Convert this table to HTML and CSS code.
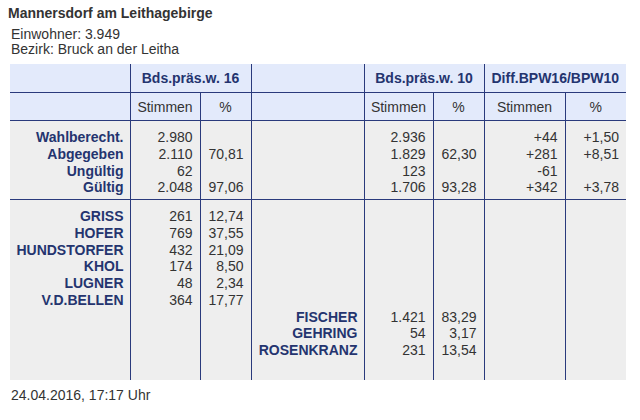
FILE: index.html
```html
<!DOCTYPE html>
<html lang="de">
<head>
<meta charset="utf-8">
<title>Mannersdorf am Leithagebirge</title>
<link rel="stylesheet" href="styles.css">
</head>
<body>
<div class="page">
  <div class="title">Mannersdorf am Leithagebirge</div>
  <div class="info">
    <div>Einwohner: 3.949</div>
    <div>Bezirk: Bruck an der Leitha</div>
  </div>
  <table class="results">
    <colgroup>
      <col class="c-name"><col class="c-st1"><col class="c-pc1"><col class="c-name2"><col class="c-st2"><col class="c-pc2"><col class="c-st3"><col class="c-pc3">
    </colgroup>
    <thead>
      <tr class="h1">
        <td></td>
        <th colspan="2">Bds.präs.w. 16</th>
        <td></td>
        <th colspan="2">Bds.präs.w. 10</th>
        <th colspan="2" class="last">Diff.BPW16/BPW10</th>
      </tr>
      <tr class="h2">
        <td></td>
        <th>Stimmen</th>
        <th>%</th>
        <td></td>
        <th>Stimmen</th>
        <th>%</th>
        <th>Stimmen</th>
        <th class="last">%</th>
      </tr>
    </thead>
    <tbody>
      <tr class="sec1">
        <td class="lbl"><div class="l">Wahlberecht.</div><div class="l">Abgegeben</div><div class="l">Ungültig</div><div class="l">Gültig</div></td>
        <td class="num"><div class="l">2.980</div><div class="l">2.110</div><div class="l">62</div><div class="l">2.048</div></td>
        <td class="num"><div class="l"></div><div class="l">70,81</div><div class="l"></div><div class="l">97,06</div></td>
        <td class="lbl"></td>
        <td class="num"><div class="l">2.936</div><div class="l">1.829</div><div class="l">123</div><div class="l">1.706</div></td>
        <td class="num"><div class="l"></div><div class="l">62,30</div><div class="l"></div><div class="l">93,28</div></td>
        <td class="num"><div class="l">+44</div><div class="l">+281</div><div class="l">-61</div><div class="l">+342</div></td>
        <td class="num last"><div class="l">+1,50</div><div class="l">+8,51</div><div class="l"></div><div class="l">+3,78</div></td>
      </tr>
      <tr class="sec2">
        <td class="lbl"><div class="l">GRISS</div><div class="l">HOFER</div><div class="l">HUNDSTORFER</div><div class="l">KHOL</div><div class="l">LUGNER</div><div class="l">V.D.BELLEN</div></td>
        <td class="num"><div class="l">261</div><div class="l">769</div><div class="l">432</div><div class="l">174</div><div class="l">48</div><div class="l">364</div></td>
        <td class="num"><div class="l">12,74</div><div class="l">37,55</div><div class="l">21,09</div><div class="l">8,50</div><div class="l">2,34</div><div class="l">17,77</div></td>
        <td class="lbl"><div class="l"></div><div class="l"></div><div class="l"></div><div class="l"></div><div class="l"></div><div class="l"></div><div class="l">FISCHER</div><div class="l">GEHRING</div><div class="l">ROSENKRANZ</div></td>
        <td class="num"><div class="l"></div><div class="l"></div><div class="l"></div><div class="l"></div><div class="l"></div><div class="l"></div><div class="l">1.421</div><div class="l">54</div><div class="l">231</div></td>
        <td class="num"><div class="l"></div><div class="l"></div><div class="l"></div><div class="l"></div><div class="l"></div><div class="l"></div><div class="l">83,29</div><div class="l">3,17</div><div class="l">13,54</div></td>
        <td class="num"></td>
        <td class="num last"></td>
      </tr>
    </tbody>
  </table>
  <div class="stamp">24.04.2016, 17:17 Uhr</div>
</div>
</body>
</html>
```

FILE: styles.css
```css
html, body {
  margin: 0;
  padding: 0;
  background: #ffffff;
}

body {
  font-family: "Liberation Sans", Arial, Helvetica, sans-serif;
  font-size: 14px;
  color: #333333;
}

.page {
  padding-top: 5px;
}

.title {
  font-weight: bold;
  line-height: 16px;
  margin-left: 8px;
  color: #333333;
}

.info {
  margin-top: 6px;
  margin-left: 11px;
  line-height: 15px;
}

.results {
  margin-top: 7px;
  margin-left: 10px;
  border-collapse: collapse;
  table-layout: fixed;
  width: 616px;
}

.c-name { width: 120px; }
.c-st1 { width: 70px; }
.c-pc1 { width: 51px; }
.c-name2 { width: 113px; }
.c-st2 { width: 69px; }
.c-pc2 { width: 51px; }
.c-st3 { width: 81px; }
.c-pc3 { width: 61px; }

.results td,
.results th {
  padding: 0;
  border-right: 1px solid #2a3a7c;
  border-bottom: 1px solid #2a3a7c;
}

.results .last {
  border-right: none;
}

.results thead td,
.results thead th {
  background: #e3eafb;
  text-align: center;
  vertical-align: middle;
}

.h1 th {
  font-weight: bold;
  color: #24346f;
}

.h1 td, .h1 th {
  height: 28px;
}

.h2 th {
  font-weight: normal;
  color: #333333;
}

.h2 td, .h2 th {
  height: 27px;
}

.results tbody td {
  background: #eeeeee;
  vertical-align: top;
}

.sec1 td {
  height: 79px;
  padding-top: 8px;
  box-sizing: border-box;
}

.sec2 td {
  height: 180px;
  padding-top: 8px;
  box-sizing: border-box;
  border-bottom: none;
}

.l {
  height: 16.75px;
  line-height: 16.75px;
  white-space: nowrap;
}

.lbl {
  text-align: right;
  padding-right: 6px !important;
  font-weight: bold;
  color: #24346f;
}

.num {
  text-align: right;
  padding-right: 7px !important;
  color: #333333;
}

.stamp {
  margin-top: 7px;
  margin-left: 11px;
  line-height: 16px;
}
```
